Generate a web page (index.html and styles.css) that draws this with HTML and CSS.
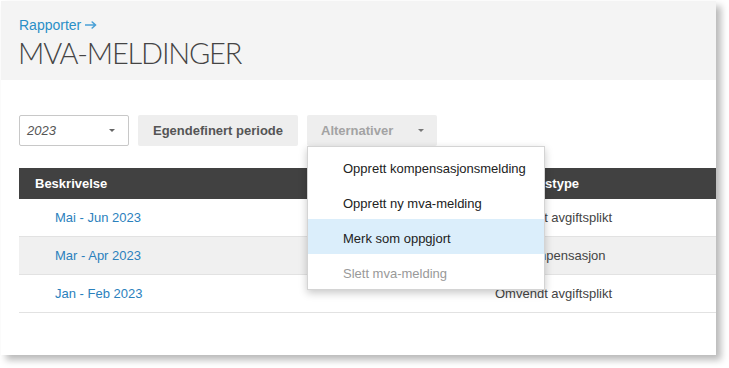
FILE: index.html
```html
<!DOCTYPE html>
<html lang="no">
<head>
<meta charset="utf-8">
<title>MVA-meldinger</title>
<link rel="stylesheet" href="styles.css">
</head>
<body>
<div class="card">
  <div class="page-head">
    <a class="crumb" href="#">Rapporter <svg class="arrow" width="12" height="8" viewBox="0 0 12 8" aria-hidden="true"><path d="M0.5 4H10.5M7.2 1L10.6 4L7.2 7" fill="none" stroke="#4aa0d6" stroke-width="1.6" stroke-linecap="round" stroke-linejoin="round"/></svg></a>
    <h1 class="title">MVA-MELDINGER</h1>
  </div>
  <div class="content">
    <div class="toolbar">
      <div class="select">
        <span class="select-value">2023</span>
        <span class="caret"></span>
      </div>
      <button class="btn btn-period">Egendefinert periode</button>
      <div class="menu-wrap">
        <button class="btn btn-menu">Alternativer <span class="caret"></span></button>
        <ul class="menu">
          <li class="menu-item">Opprett kompensasjonsmelding</li>
          <li class="menu-item">Opprett ny mva-melding</li>
          <li class="menu-item active">Merk som oppgjort</li>
          <li class="menu-item disabled">Slett mva-melding</li>
        </ul>
      </div>
    </div>
    <table class="grid">
      <thead>
        <tr><th class="c1">Beskrivelse</th><th class="c2">Meldingstype</th></tr>
      </thead>
      <tbody>
        <tr><td class="c1"><a href="#">Mai - Jun 2023</a></td><td class="c2">Omvendt avgiftsplikt</td></tr>
        <tr class="alt"><td class="c1"><a href="#">Mar - Apr 2023</a></td><td class="c2">Kun kompensasjon</td></tr>
        <tr><td class="c1"><a href="#">Jan - Feb 2023</a></td><td class="c2">Omvendt avgiftsplikt</td></tr>
      </tbody>
    </table>
  </div>
</div>
</body>
</html>
```
FILE: styles.css
```css
html, body {
  margin: 0;
  padding: 0;
  background: #ffffff;
}
body {
  font-family: "Liberation Sans", Arial, sans-serif;
  font-size: 13px;
  color: #333;
  padding: 1px 0 0 1px;
  min-height: 368px;
  box-sizing: border-box;
}
.card {
  width: 715px;
  height: 354px;
  background: #fff;
  box-shadow: 5px 5px 7px rgba(0, 0, 0, 0.28);
  overflow: hidden;
}
.page-head {
  background: #f4f4f4;
  height: 79px;
  padding: 0 0 0 18px;
  box-sizing: border-box;
}
.crumb {
  display: inline-block;
  margin-top: 16px;
  font-size: 14px;
  line-height: 16px;
  color: #2a8fc7;
  text-decoration: none;
}
.arrow {
  vertical-align: 1px;
}
.title {
  margin: 3px 0 0 -1px;
  font-family: Lato, "Liberation Sans", sans-serif;
  font-weight: 300;
  font-size: 29px;
  line-height: 34px;
  letter-spacing: -1.2px;
  color: #444;
}
.content {
  padding: 35px 0 0 18px;
}
.toolbar {
  display: flex;
  gap: 9px;
  height: 31px;
  margin-bottom: 22px;
}
.select {
  width: 110px;
  height: 31px;
  box-sizing: border-box;
  border: 1px solid #c8c8c8;
  border-radius: 2px;
  display: flex;
  align-items: center;
  justify-content: space-between;
  padding: 0 13px 0 7px;
}
.select-value {
  font-style: italic;
  color: #555;
  font-size: 13px;
}
.caret {
  display: inline-block;
  width: 0;
  height: 0;
  border-left: 3px solid transparent;
  border-right: 3px solid transparent;
  border-top: 3px solid #666;
}
.btn {
  height: 31px;
  border: none;
  border-radius: 2px;
  background: #eeeeee;
  font-family: "Liberation Sans", Arial, sans-serif;
  font-weight: 700;
  font-size: 13px;
  color: #555;
  padding: 0 14px;
  cursor: pointer;
}
.btn-period {
  width: 160px;
  padding: 0;
}
.menu-wrap {
  position: relative;
}
.btn-menu {
  width: 130px;
  color: #a3a3a3;
  display: flex;
  align-items: center;
  justify-content: space-between;
  padding: 0 13px 0 14px;
}
.btn-menu .caret {
  border-top-color: #777;
}
.menu {
  position: absolute;
  top: 31px;
  left: 0;
  width: 238px;
  box-sizing: border-box;
  margin: 0;
  padding: 2px 0 0;
  list-style: none;
  background: #fff;
  border: 1px solid #d4d4d4;
  box-shadow: 0 3px 8px rgba(0, 0, 0, 0.22);
  z-index: 2;
}
.menu-item {
  height: 35px;
  box-sizing: border-box;
  padding: 4px 0 0 35px;
  line-height: 31px;
  font-size: 13px;
  color: #222;
  white-space: nowrap;
}
.menu-item.active {
  background: #dbeefb;
}
.menu-item.disabled {
  color: #999;
}
.grid {
  border-collapse: collapse;
  width: 720px;
  table-layout: fixed;
}
.grid th {
  background: #414141;
  color: #fff;
  font-weight: 700;
  font-size: 13px;
  text-align: left;
  height: 31px;
  padding: 0;
}
.grid th.c1 {
  width: 451px;
  padding-left: 16px;
  box-sizing: border-box;
}
.grid th.c2 {
  padding-left: 26px;
}
.grid td {
  height: 37px;
  padding: 0;
  border-bottom: 1px solid #e2e2e2;
  color: #444;
}
.grid td.c1 {
  padding-left: 36px;
}
.grid td.c2 {
  padding-left: 25px;
}
.grid tr.alt td {
  background: #f0f0f0;
}
.grid a {
  color: #2b81bd;
  text-decoration: none;
}
```
